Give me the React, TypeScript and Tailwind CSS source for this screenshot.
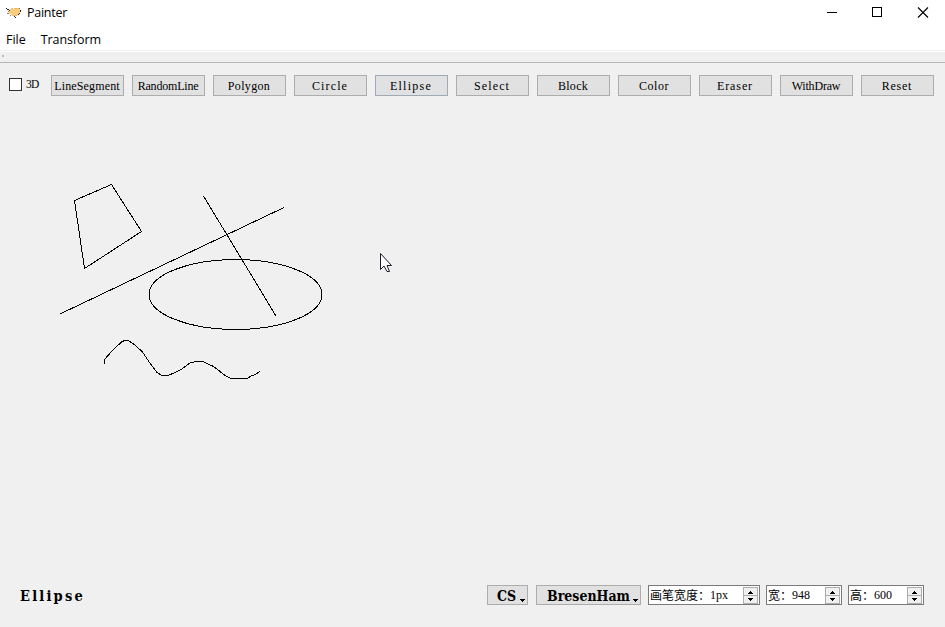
import type { ReactNode } from "react";

const tools = [
  { label: "LineSegment", tracking: "tracking-[0.15px]" },
  { label: "RandomLine", tracking: "tracking-[-0.2px]" },
  { label: "Polygon", tracking: "tracking-[0.35px]" },
  { label: "Circle", tracking: "tracking-[1.15px]" },
  { label: "Ellipse", tracking: "tracking-[1.25px]", active: true },
  { label: "Select", tracking: "tracking-[1.15px]" },
  { label: "Block", tracking: "tracking-[0.3px]" },
  { label: "Color", tracking: "tracking-[0.5px]" },
  { label: "Eraser", tracking: "tracking-[0.9px]" },
  { label: "WithDraw", tracking: "tracking-[-0.2px]" },
  { label: "Reset", tracking: "tracking-[0.75px]" },
];

function AppIcon() {
  return (
    <svg width="16" height="14" viewBox="0 0 16 14" shapeRendering="crispEdges">
      <path d="M4 3h10v4h-1v1h-1v1H5V8H3V5h1z" fill="#fbcb7e" />
      <path d="M5 2h2v1H5zM8 2h5v1H8zM6 9h5v1H6z" fill="#eeba70" />
      <path d="M0 2h1v1H0zM1 3h2v1H1zM3 4h1v1H3zM14 4h1v2h-1zM13 7h1v1h-1zM12 8h1v1h-1zM8 10h1v1H8zM9 11h1v1H9z" fill="#222" />
      <path d="M2 5h1v1H2zM1 7h2v1H1zM4 9h1v1H4zM13 2h1v1h-1z" fill="#8a8b5c" />
    </svg>
  );
}

function Combo({ children, className }: { children: ReactNode; className: string }) {
  return (
    <button className={"relative flex h-5 items-center border border-[#adadad] bg-[#e1e1e1] pt-px font-['DejaVu_Serif_Condensed','DejaVu_Serif',serif] text-[14px] font-bold leading-none " + className}>
      {children}
      <svg className="absolute right-[2px] bottom-[2px]" width="5" height="3" viewBox="0 0 5 3" shapeRendering="crispEdges">
        <path d="M0 0h5v1H4v1H3v1H2V2H1V1H0z" />
      </svg>
    </button>
  );
}

function Spin({ label, value, className }: { label: string; value: string; className: string }) {
  return (
    <div className={"flex h-5 items-center border border-[#7a7a7a] bg-white pr-px pl-px " + className}>
      <span className="font-['Noto_Sans_CJK_SC',sans-serif] text-[12px] leading-none">{label}</span>
      <span className="font-['Liberation_Serif',serif] text-[12px] leading-none">{value}</span>
      <span className="ml-auto flex h-[17px] w-[15px] flex-col border border-[#adadad] bg-[#f0f0f0]">
        <svg width="13" height="15" viewBox="0 0 13 15" shapeRendering="crispEdges">
          <path d="M0 7h13v1H0z" fill="#adadad" />
          <path d="M6 3h1v1h1v1h1v1H4V5h1V4h1zM4 10h5v1H8v1H7v1H6v-1H5v-1H4z" />
        </svg>
      </span>
    </div>
  );
}

export default function App() {
  return (
    <div className="flex h-[627px] w-[945px] flex-col overflow-hidden bg-[#f0f0f0] text-black">
      <header className="bg-white font-['Open_Sans','Noto_Sans',sans-serif] text-[12.5px]">
        <div className="flex h-[26px] items-center pl-[6px]">
          <AppIcon />
          <h1 className="ml-[5px] tracking-[-0.25px]">Painter</h1>
          <div className="ml-auto flex h-[24px] items-center self-start pr-[16px]">
            <svg width="103" height="13" viewBox="0 0 103 13" fill="none" stroke="#000">
              <path d="M1 6.5h10M46.5 1.5h9v9h-9z" shapeRendering="crispEdges" />
              <path d="M92 1.5l10 10M102 1.5l-10 10" strokeWidth="1.1" />
            </svg>
          </div>
        </div>
        <nav className="flex h-6 items-center gap-[15px] pt-[4px] pl-[6px]">
          <span>File</span>
          <span className="tracking-[-0.1px]">Transform</span>
        </nav>
      </header>
      <div className="h-[13px] border-t border-b border-t-[#f0f0f0] border-b-[#b5b5b5]">
        <div className="h-px bg-white" />
        <div className="mt-[3px] ml-[2px] size-[2px] bg-[#b8b8b8]" />
      </div>
      <div className="flex h-[47px] gap-2 pt-3 pl-[9px] font-['Liberation_Serif',serif] text-[12px] leading-none">
        <label className="flex h-[19px] w-[34px] items-center gap-[4px]">
          <span className="size-[13px] shrink-0 border border-[#333] bg-white" />
          <span className="pt-px text-[11.5px] tracking-[-0.8px]">3D</span>
        </label>
        {tools.map((t) => (
          <button
            key={t.label}
            className={
              "flex h-[21px] w-[73px] items-center justify-center border pt-px pr-px " +
              t.tracking +
              (t.active ? " border-[#9faab4] bg-[#dfe1e3]" : " border-[#adadad] bg-[#e1e1e1]")
            }
          >
            {t.label}
          </button>
        ))}
      </div>
      <main className="flex-1">
        <svg className="block" width="945" height="470" viewBox="0 110 945 470" fill="none" stroke="#000" shapeRendering="crispEdges">
          <path d="M74.5 200.5L111.5 184.5L141.5 231.5L84.5 268.5Z" />
          <path d="M60 314L284 207.5M203.5 196L276 316" />
          <ellipse cx="235.5" cy="294.5" rx="86.5" ry="35" />
          <path d="M104.5 363.5v-4L112.5 350.5L121.5 342L124.5 340.5H128.5L135 345L142.5 352L148.5 361L156.5 372L162 375.5H168L174 373L182 369L190 363L196 361.5H203L213.5 366.5L226.5 376.5L231.5 378.5H247.5L251 376L255 374.5L260 371.5" />
          <path d="M380.5 253.5v16l3.5-3.5l3 5.5h2.5l-2.5-6h4.5z" fill="#fff" stroke="#1a1a2e" shapeRendering="auto" />
        </svg>
      </main>
      <footer className="flex h-[47px] items-start pt-[5px] pl-[20px]">
        <span className="flex h-[21px] w-[467px] items-center pt-px font-['DejaVu_Serif_Condensed','DejaVu_Serif',serif] text-[14.5px] leading-none font-bold tracking-[2.2px]">Ellipse</span>
        <Combo className="mr-2 w-[41px] pl-[9px]">CS</Combo>
        <Combo className="mr-[7px] w-[105px] pl-[10px]">BresenHam</Combo>
        <Spin className="mr-[6px] w-[112px]" label="画笔宽度：" value="1px" />
        <Spin className="mr-[6px] w-[76px]" label="宽：" value="948" />
        <Spin className="w-[76px]" label="高：" value="600" />
      </footer>
    </div>
  );
}
